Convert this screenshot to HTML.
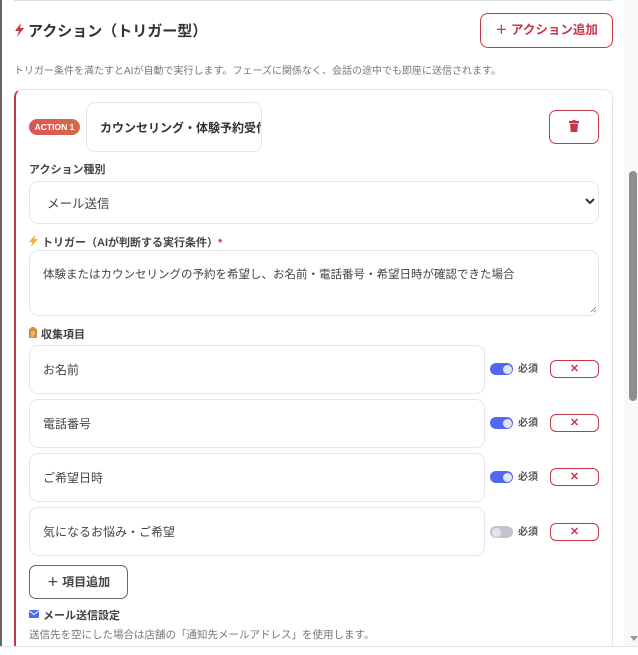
<!DOCTYPE html>
<html><head><meta charset="utf-8"><style>
*{box-sizing:border-box;margin:0;padding:0}
html,body{width:638px;height:655px;overflow:hidden}
body{background:#fff;font-family:"Liberation Sans","Noto Sans CJK JP",sans-serif;color:#333;position:relative}
.a{position:absolute}
.inp{position:absolute;border:1px solid #e6e6f0;border-radius:9px;background:#fff;font-size:12px;color:#444;padding-left:13px;display:flex;align-items:center}
.lbl{position:absolute;font-size:11px;font-weight:bold;color:#444;white-space:nowrap}
.tg{position:absolute;width:23px;height:12px;border-radius:6px;background:#5169f0}
.tg::after{content:"";position:absolute;right:1.5px;top:1.5px;width:9px;height:9px;border-radius:50%;background:#e2e4ec}
.tg.off{background:#c3c5cc}.tg.off::after{right:auto;left:1.5px}
.req{position:absolute;font-size:10px;font-weight:bold;color:#555}
.xb{position:absolute;width:49px;height:18px;border:1px solid #c8364a;border-radius:6px;color:#c8364a;font-size:11px;font-weight:bold;text-align:center;line-height:16px}
</style></head><body>
<div class="a" style="left:0;top:0;width:2px;height:646px;background:#666"></div>
<div class="a" style="left:14px;top:0;width:599px;height:1px;background:#ddd"></div>
<div class="a" style="left:624px;top:0;width:14px;height:646px;background:#f8f8f8"></div>
<div class="a" style="left:629px;top:171px;width:8px;height:230px;background:#8e8e8e;border-radius:4px"></div>
<div class="a" style="left:630px;top:636px;width:0;height:0;border-left:4px solid transparent;border-right:4px solid transparent;border-top:5px solid #999"></div>

<svg class="a" style="left:14px;top:23px" width="11" height="14" viewBox="0 0 11 14"><path d="M7 0L1 8h4l-2 6 7-9H6z" fill="#c8364a"/></svg>
<div class="a" style="left:28px;top:20px;font-size:15px;font-weight:bold;color:#333">アクション（トリガー型）</div>
<div class="a" style="left:480px;top:13px;width:133px;height:35px;border:1px solid #c8364a;border-radius:8px;color:#c8364a;font-size:12.5px;font-weight:bold;text-align:center;line-height:33px">＋ アクション追加</div>
<div class="a" style="left:14px;top:62px;font-size:10px;color:#777;white-space:nowrap">トリガー条件を満たすとAIが自動で実行します。フェーズに関係なく、会話の途中でも即座に送信されます。</div>

<div class="a" style="left:14px;top:89px;width:599px;height:557px;border:1px solid #e4e4e4;border-bottom:none;border-left:2px solid #c8364a;border-radius:8px 8px 0 0"></div>
<div class="a" style="left:29px;top:119px;width:51px;height:16px;border-radius:8px;background:linear-gradient(90deg,#d8545a,#d96b45);color:#fff;font-size:8.5px;font-weight:bold;text-align:center;line-height:16px">ACTION 1</div>
<div class="inp" style="left:86px;top:102px;width:176px;height:50px;font-weight:bold;overflow:hidden;white-space:nowrap;color:#333">カウンセリング・体験予約受付</div>
<div class="a" style="left:549px;top:110px;width:50px;height:34px;border:1px solid #c8364a;border-radius:7px"></div>
<svg class="a" style="left:569px;top:120px" width="10" height="12" viewBox="0 0 10 12"><rect x="0" y="1" width="10" height="2" fill="#c8364a"/><rect x="3.5" y="0" width="3" height="2" fill="#c8364a"/><path d="M1 3.5h8l-.7 8.5H1.7z" fill="#c8364a"/></svg>

<div class="lbl" style="left:29px;top:161px">アクション種別</div>
<div class="inp" style="left:29px;top:181px;width:570px;height:43px;padding-left:17px;font-size:12.5px">メール送信</div>
<svg class="a" style="left:585px;top:198px" width="10" height="7" viewBox="0 0 10 7"><path d="M1 1l4 4 4-4" stroke="#333" stroke-width="2" fill="none"/></svg>

<svg class="a" style="left:29px;top:235px" width="9" height="12" viewBox="0 0 9 12"><path d="M6 0L0 7h3.5L2 12l7-8H5.5z" fill="#f0b429"/></svg>
<div class="lbl" style="left:42px;top:234px">トリガー（AIが判断する実行条件）<span style="color:#c8364a">*</span></div>
<div class="inp" style="left:29px;top:250px;width:570px;height:66px;align-items:flex-start;padding-top:15px;font-size:11.5px">体験またはカウンセリングの予約を希望し、お名前・電話番号・希望日時が確認できた場合</div>
<svg class="a" style="left:590px;top:306px" width="7" height="7"><path d="M1 6L6 1M4 6L6 4" stroke="#777" stroke-width="0.8"/></svg>

<svg class="a" style="left:29px;top:327px" width="8" height="11" viewBox="0 0 8 11"><rect x="0" y="1.5" width="8" height="9.5" rx="1" fill="#d98a2e"/><rect x="2" y="0" width="4" height="3" rx="1" fill="#d98a2e"/><path d="M2 5h4M2 7h4M2 9h3" stroke="#fff" stroke-width="0.8"/></svg>
<div class="lbl" style="left:41px;top:326px">収集項目</div>

<div class="inp" style="left:29px;top:345px;width:456px;height:49px">お名前</div>
<div class="tg" style="left:490px;top:363px"></div><div class="req" style="left:518px;top:360px">必須</div><div class="xb" style="left:550px;top:360px">✕</div>
<div class="inp" style="left:29px;top:399px;width:456px;height:49px">電話番号</div>
<div class="tg" style="left:490px;top:417px"></div><div class="req" style="left:518px;top:414px">必須</div><div class="xb" style="left:550px;top:414px">✕</div>
<div class="inp" style="left:29px;top:453px;width:456px;height:49px">ご希望日時</div>
<div class="tg" style="left:490px;top:471px"></div><div class="req" style="left:518px;top:468px">必須</div><div class="xb" style="left:550px;top:468px">✕</div>
<div class="inp" style="left:29px;top:507px;width:456px;height:49px">気になるお悩み・ご希望</div>
<div class="tg off" style="left:490px;top:526px"></div><div class="req" style="left:518px;top:523px">必須</div><div class="xb" style="left:550px;top:523px">✕</div>

<div class="a" style="left:29px;top:565px;width:99px;height:34px;border:1px solid #666;border-radius:7px;font-size:12px;font-weight:bold;color:#444;text-align:center;line-height:32px">＋ 項目追加</div>
<svg class="a" style="left:29px;top:610px" width="10" height="8" viewBox="0 0 10 8"><rect width="10" height="8" rx="1" fill="#5169f0"/><path d="M0.5 1L5 4.5 9.5 1" stroke="#fff" stroke-width="1" fill="none"/></svg>
<div class="lbl" style="left:43px;top:607px">メール送信設定</div>
<div class="a" style="left:29px;top:627px;font-size:10.5px;color:#777;white-space:nowrap">送信先を空にした場合は店舗の「通知先メールアドレス」を使用します。</div>
<div class="a" style="left:0;top:646px;width:638px;height:9px;background:#fff;border-top:1px solid #e4e4e4"></div>
</body></html>
